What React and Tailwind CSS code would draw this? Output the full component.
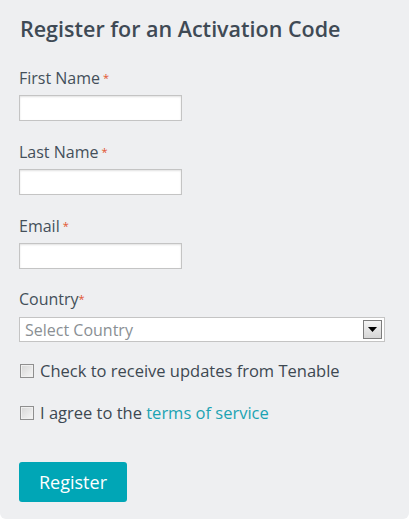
import React from 'react';

const Req = () => <span className="text-[#e2542f] text-[11px] align-top ml-[3px]">*</span>;

const Field = ({ label, last }) => (
  <div className={last ? 'mb-[20px]' : 'mb-[21px]'}>
    <label className="block text-[16px] leading-[20px] text-[#444f5a] mb-[7px]">
      {label}
      <Req />
    </label>
    <input
      type="text"
      className="block w-[163px] h-[26px] bg-white border border-[#c4c4c4] shadow-[inset_0_1px_2px_rgba(0,0,0,0.12)] outline-none"
    />
  </div>
);

const Box = () => (
  <span className="inline-block w-[14px] h-[14px] border border-[#8f8f8f] bg-gradient-to-br from-[#d6d6d6] to-[#f6f6f6] shadow-[inset_0_0_0_1px_#f0f0f0] shrink-0" />
);

export default function App() {
  return (
    <div className="w-[409px] h-[522px] bg-white" style={{ fontFamily: '"Open Sans", Lato, sans-serif' }}>
      <div className="bg-[#eeeff1] h-[519px] rounded-b-[6px] pl-[19px] pr-[24px] pt-[15px]">
        <h1 className="text-[21.5px] leading-[28px] font-semibold text-[#3f4a55] ml-[1px] mb-[25px]">
          Register for an Activation Code
        </h1>

        <Field label="First Name" />
        <Field label="Last Name" />
        <Field label="Email" last />

        <div className="mb-[19px]">
          <label className="block text-[16px] leading-[20px] text-[#444f5a] mb-[8px]">
            Country<span className="text-[#e2542f] text-[11px] align-top">*</span>
          </label>
          <div className="flex items-center h-[25px] w-[366px] bg-white border border-[#c4c4c4]">
            <span className="flex-1 pl-[5px] text-[16px] leading-[20px] text-[#8a8f94]">Select Country</span>
            <span className="w-[19px] h-[19px] mr-[2px] border border-[#7d7d7d] bg-gradient-to-b from-[#f4f4f4] to-[#d6d6d6] flex items-center justify-center">
              <svg width="9" height="5" viewBox="0 0 9 5">
                <path d="M0 0H9L4.5 5Z" fill="#000" />
              </svg>
            </span>
          </div>
        </div>

        <div className="flex items-center gap-[6px] ml-[1px] h-[20px] text-[16.5px] leading-[20px] text-[#3d4852] mb-[22px]">
          <Box />
          <span>Check to receive updates from Tenable</span>
        </div>
        <div className="flex items-center gap-[6px] ml-[1px] h-[20px] text-[16.5px] leading-[20px] text-[#3d4852]">
          <Box />
          <span>
            I agree to the <a className="text-[#1ba3b3]">terms of service</a>
          </span>
        </div>

        <button className="block mt-[39px] w-[108px] h-[40px] rounded-[3px] bg-[#00a6b6] text-white text-[18px]">
          Register
        </button>
      </div>
    </div>
  );
}
